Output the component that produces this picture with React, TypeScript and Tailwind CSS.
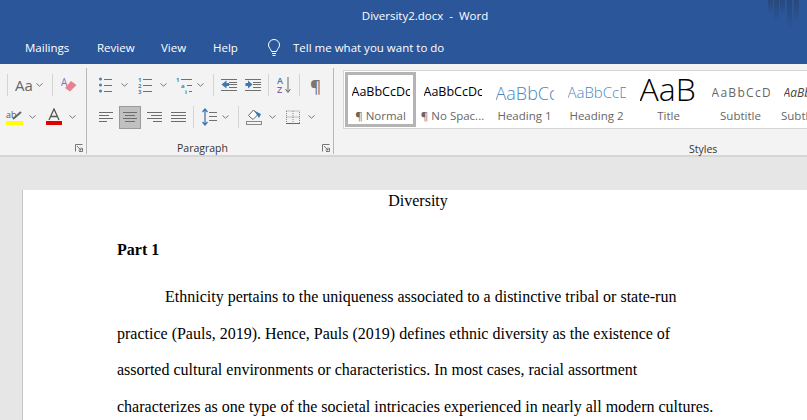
import React from "react";

const Chev = () => (
  <svg width="7" height="4" viewBox="0 0 7 4" className="shrink-0"><path d="M0.5 0.5 L3.5 3.2 L6.5 0.5" fill="none" stroke="#777" strokeWidth="1" /></svg>
);
const Ico = ({ w = 16, children }: { w?: number; children: React.ReactNode }) => (
  <svg width={w} height="18" viewBox={`0 0 ${w} 18`} className="shrink-0">{children}</svg>
);
const Lines = ({ x, w, ys, c = "#707070" }: { x: number; w: number; ys: number[]; c?: string }) => (
  <>{ys.map((y) => <rect key={y} x={x} y={y} width={w} height="1" fill={c} />)}</>
);
const Sep = () => <div className="w-px h-[22px] bg-[#d4d4d4] shrink-0" />;

const Align = ({ kind }: { kind: string }) => {
  const rows: [number, number][] = kind === "l" ? [[0,14],[0,10],[0,14],[0,8]] : kind === "c" ? [[0,14],[2,10],[0,14],[2,10]] : kind === "r" ? [[0,15],[4,11],[0,15],[6,9]] : [[0,15],[0,15],[0,15],[0,15]];
  const w = kind === "l" || kind === "c" ? 14 : 15;
  return <svg width={w} height="12" viewBox={`0 0 ${w} 12`} className="shrink-0">{rows.map(([x, rw], i) => <rect key={i} x={x} y={1 + i * 3} width={rw} height="1" fill="#6c6c6c" />)}</svg>;
};

const Launcher = () => (
  <svg className="absolute right-[3px] bottom-[2px]" width="8" height="8" viewBox="0 0 8 8"><path d="M0.5 7.5 V0.5 H7.5 M7.5 4 V7.5 H4 M2 2 L6 6 M6 3.5 V6 H3.5" fill="none" stroke="#777" strokeWidth="1" /></svg>
);

const styles = [
  { t: "AaBbCcDc", l: "¶ Normal", c: "text-black text-[12.5px]", sel: true },
  { t: "AaBbCcDc", l: "¶ No Spac...", c: "text-black text-[12.5px]" },
  { t: "AaBbCc", l: "Heading 1", c: "text-[#4a86bd] text-[18px] font-light" },
  { t: "AaBbCcD", l: "Heading 2", c: "text-[#4a86bd] text-[15px] font-light" },
  { t: "AaB", l: "Title", c: "text-black text-[32px] font-light pb-[8px]" },
  { t: "AaBbCcD", l: "Subtitle", c: "text-[#666] text-[12px] tracking-[1.3px]" },
  { t: "AaBbCcDd", l: "Subtle Em...", c: "text-[#444] text-[12px] italic" },
];

const doc = [
  "practice (Pauls, 2019). Hence, Pauls (2019) defines ethnic diversity as the existence of",
  "assorted cultural environments or characteristics. In most cases, racial assortment",
  "characterizes as one type of the societal intricacies experienced in nearly all modern cultures.",
];

export default function App() {
  return (
    <div className="relative w-[807px] h-[420px] overflow-hidden bg-[#e6e6e6] font-['Open_Sans','Noto_Sans',sans-serif]">
      <div className="bg-[#2b579a] h-[64px] flex flex-col text-white">
        <div className="h-[32px] flex items-center justify-center text-[11.5px] pl-[43px] whitespace-pre">Diversity2.docx  -  Word</div>
        <div className="flex items-center h-[32px] pl-[25px] text-[11.5px] whitespace-nowrap">
          <span className="w-[72px]">Mailings</span>
          <span className="w-[64px]">Review</span>
          <span className="w-[52px]">View</span>
          <span className="w-[54px]">Help</span>
          <svg width="14" height="18" viewBox="0 0 14 18" className="mr-[12px] shrink-0"><path d="M4.5 12.5 C4 10 1.5 9 1.5 6 A5.5 5.5 0 0 1 12.5 6 C12.5 9 10 10 9.5 12.5 Z" fill="none" stroke="#fff" strokeWidth="1" /><path d="M5 14.5 H9 M5.5 16.5 H8.5" stroke="#fff" strokeWidth="1" /></svg>
          <span>Tell me what you want to do</span>
        </div>
      </div>

      <div className="flex h-[93px] bg-[#f3f3f3] border-b-2 border-[#d6d6d6] text-[#444]">
        {/* Font */}
        <div className="relative w-[87px] shrink-0 border-r border-[#b8b8b8] mt-[4px] mb-[1px]">
          <div className="flex items-center h-[24px] mt-[5px] pl-[7px]">
            <Sep />
            <span className="text-[15px] leading-none text-[#666] ml-[7px] w-[16px]">Aa</span>
            <div className="ml-[5px]"><Chev /></div>
            <div className="ml-[9px]"><Sep /></div>
            <div className="ml-[8px]">
              <Ico w={16}>
                <text x="0" y="10" fontSize="10" fill="#8a6fb0" fontFamily="Open Sans">A</text>
                <path d="M4 12 L10 5 L15.5 9 L9 15.5 Z" fill="#e8808f" />
              </Ico>
            </div>
          </div>
          <div className="flex items-center h-[26px] mt-[7px] pl-[6px]">
            <svg width="17" height="18" viewBox="0 0 17 18" className="shrink-0"><text x="0" y="10" fontSize="9" fill="#555" fontFamily="Open Sans">ab</text><path d="M7 11 L15 4" stroke="#666" strokeWidth="2" /><rect x="0" y="13" width="17" height="4" fill="#ffff00" /></svg>
            <div className="ml-[6px]"><Chev /></div>
            <svg className="ml-[10px] shrink-0" width="16" height="18" viewBox="0 0 16 18"><path d="M3 12 L8 1 L13 12 M5 8.5 H11" fill="none" stroke="#555" strokeWidth="1.3" /><rect x="0" y="13" width="16" height="4" fill="#e00000" /></svg>
            <div className="ml-[7px]"><Chev /></div>
          </div>
          <Launcher />
        </div>

        {/* Paragraph */}
        <div className="relative w-[247px] shrink-0 border-r border-[#b8b8b8] mt-[4px] mb-[1px]">
          <div className="flex items-center h-[24px] mt-[5px] pl-[12px]">
            <Ico w={13}>
              <circle cx="1.5" cy="3" r="1.5" fill="#4a7fb0" /><circle cx="1.5" cy="9" r="1.5" fill="#4a7fb0" /><circle cx="1.5" cy="15" r="1.5" fill="#4a7fb0" />
              <Lines x={5} w={8} ys={[3, 9, 15]} />
            </Ico>
            <div className="ml-[9px]"><Chev /></div>
            <div className="ml-[10px]">
              <Ico w={14}>
                <text x="0" y="6" fontSize="6" fill="#4a7fb0" fontWeight="700">1</text><text x="0" y="12" fontSize="6" fill="#4a7fb0" fontWeight="700">2</text><text x="0" y="18" fontSize="6" fill="#4a7fb0" fontWeight="700">3</text>
                <Lines x={5} w={9} ys={[3, 9, 15]} />
              </Ico>
            </div>
            <div className="ml-[8px]"><Chev /></div>
            <div className="ml-[9px]">
              <Ico w={16}>
                <text x="0" y="6" fontSize="6" fill="#4a7fb0" fontWeight="700">1</text><text x="5" y="12" fontSize="6" fill="#4a7fb0" fontWeight="700">a</text><text x="9" y="18" fontSize="6" fill="#4a7fb0" fontWeight="700">i</text>
                <Lines x={5} w={11} ys={[3]} /><Lines x={11} w={5} ys={[9]} /><Lines x={13} w={3} ys={[15]} />
              </Ico>
            </div>
            <div className="ml-[5px]"><Chev /></div>
            <div className="ml-[9px]"><Sep /></div>
            <div className="ml-[7px]">
              <svg width="16" height="14" viewBox="0 0 16 14" className="shrink-0"><Lines x={0} w={16} ys={[1, 12]} /><Lines x={8} w={8} ys={[4, 6, 9]} /><path d="M0.5 6.5 L5.5 2.5 V5 H8 V8 H5.5 V10.5 Z" fill="#3f78ad" /></svg>
            </div>
            <div className="ml-[8px]">
              <svg width="16" height="14" viewBox="0 0 16 14" className="shrink-0"><Lines x={0} w={16} ys={[1, 12]} /><Lines x={8} w={8} ys={[4, 6, 9]} /><path d="M7.5 6.5 L3 2.5 V5 H0.5 V8 H3 V10.5 Z" fill="#3f78ad" /></svg>
            </div>
            <div className="ml-[7px]"><Sep /></div>
            <div className="ml-[8px]">
              <svg width="14" height="18" viewBox="0 0 14 18" className="shrink-0"><text x="0" y="8" fontSize="9" fontWeight="600" fill="#3f78ad" fontFamily="Open Sans">A</text><text x="0" y="17" fontSize="9" fontWeight="600" fill="#8a5fb0" fontFamily="Open Sans">Z</text><path d="M11 1 V16 M8.5 13 L11 16.5 L13.5 13" fill="none" stroke="#666" strokeWidth="1" /></svg>
            </div>
            <div className="ml-[8px]"><Sep /></div>
            <span className="ml-[10px] text-[17px] leading-none text-[#777] font-semibold">¶</span>
          </div>
          <div className="flex items-center h-[26px] mt-[7px] pl-[12px]">
            <Align kind="l" />
            <div className="ml-[6px] w-[22px] h-[23px] bg-[#c0c0c0] border border-[#9a9a9a] flex items-center justify-center shrink-0"><Align kind="c" /></div>
            <div className="ml-[6px]"><Align kind="r" /></div>
            <div className="ml-[9px]"><Align kind="j" /></div>
            <div className="ml-[7px]"><Sep /></div>
            <div className="ml-[8px]">
              <Ico w={15}>
                <path d="M3 1 V17 M0.5 4 L3 1 L5.5 4 M0.5 14 L3 17 L5.5 14" fill="none" stroke="#3f78ad" strokeWidth="1.3" />
                <Lines x={7} w={8} ys={[4, 8, 12]} />
              </Ico>
            </div>
            <div className="ml-[5px]"><Chev /></div>
            <div className="ml-[9px]"><Sep /></div>
            <div className="ml-[7px]">
              <svg width="16" height="18" viewBox="0 0 16 18" className="shrink-0"><path d="M2.5 7.5 L7.5 2 L12 6.5 L7 11.5 Z" fill="#fff" stroke="#666" /><path d="M8 2.5 L15 6 L13 10 Z" fill="#3f78ad" /><rect x="0.5" y="13.5" width="15" height="3" fill="none" stroke="#888" /></svg>
            </div>
            <div className="ml-[7px]"><Chev /></div>
            <div className="ml-[10px]">
              <svg width="14" height="15" viewBox="0 0 14 15" className="shrink-0"><path d="M0.5 1 H13.5 V13 M0.5 1 V13 M7 1 V13 M0.5 7 H13.5" fill="none" stroke="#888" strokeDasharray="1 1" /><rect x="0" y="13" width="14" height="1" fill="#666" /></svg>
            </div>
            <div className="ml-[8px]"><Chev /></div>
          </div>
          <div className="absolute left-0 right-0 bottom-[-2px] text-center text-[10.5px] leading-[15px] text-[#333] pr-[15px]">Paragraph</div>
          <Launcher />
        </div>

        {/* Styles */}
        <div className="relative flex-1 pl-[9px] pt-[6px] min-w-0">
          <div className="flex h-[59px] bg-white border border-[#d6d6d6] border-r-0 p-[1px] gap-[1px] overflow-hidden">
            {styles.map((s) => (
              <div key={s.l} className={`w-[71px] shrink-0 h-[55px] box-border flex flex-col items-center overflow-hidden border-[3px] ${s.sel ? "border-[#b4b4b4]" : "border-transparent"}`}>
                <div className={`h-[31px] mt-[2px] w-[58px] flex items-center justify-start overflow-hidden whitespace-nowrap leading-none ${s.c}`}>
                  <span className="shrink-0">{s.t}</span>
                </div>
                <div className="text-[11.5px] text-[#666] leading-[16px] whitespace-nowrap">{s.l}</div>
              </div>
            ))}
          </div>
          <div className="absolute left-[355px] bottom-[-2px] text-[10.5px] leading-[15px] text-[#333]">Styles</div>
        </div>
      </div>

      {/* Document */}
      <div className="mt-[33px] ml-[22px] h-[240px] bg-white border-l border-[#c6c6c6] pl-[94px] text-black font-['Liberation_Serif',serif] text-[16px] whitespace-nowrap overflow-hidden">
        <div className="w-[602px] text-center leading-[22px]">Diversity</div>
        <div className="font-bold leading-[22px] mt-[27px]">Part 1</div>
        <div className="leading-[36.6px] mt-[18px]">
          <div className="pl-[48px]">Ethnicity pertains to the uniqueness associated to a distinctive tribal or state-run</div>
          {doc.map((d) => <div key={d}>{d}</div>)}
        </div>
      </div>

      {/* Title-bar decoration */}
      <svg className="absolute right-0 top-0" width="40" height="32" viewBox="0 0 40 32">
        <defs>
          <linearGradient id="bar" x1="0" y1="0" x2="0" y2="1"><stop offset="0" stopColor="#27487c" /><stop offset="1" stopColor="#2b579a" /></linearGradient>
        </defs>
        {[[1, 15], [7, 23], [13, 15], [20, 31], [27, 23]].map(([x, h]) => <rect key={x} x={x} y="0" width="5" height={h} fill="url(#bar)" />)}
      </svg>
    </div>
  );
}
